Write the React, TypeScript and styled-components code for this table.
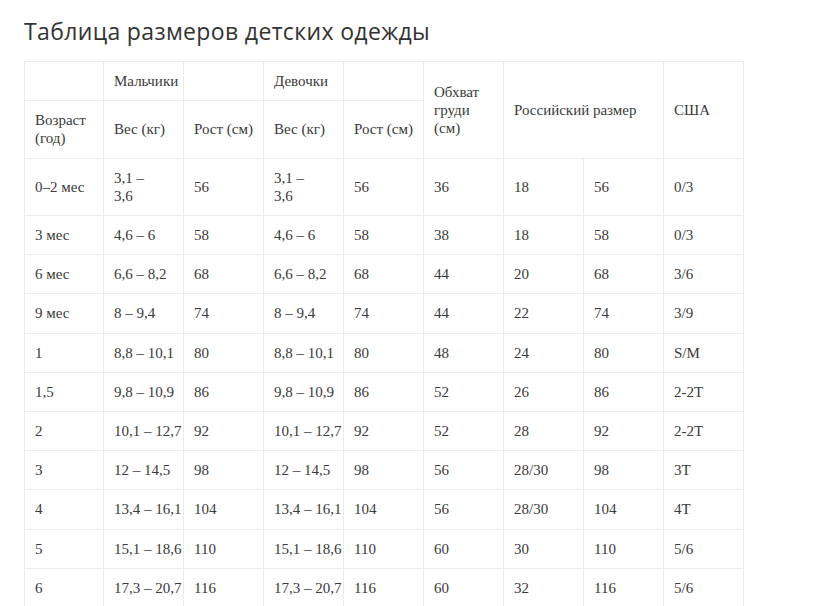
import React from 'react'
import styled, { createGlobalStyle } from 'styled-components'

const GlobalStyle = createGlobalStyle`
  html, body {
    margin: 0;
    padding: 0;
    background: #ffffff;
  }
`

type Row = [string, string, string, string, string, string, string, string, string]

const rows: Row[] = [
	['0–2 мес', '3,1 –\n3,6', '56', '3,1 –\n3,6', '56', '36', '18', '56', '0/3'],
	['3 мес', '4,6 – 6', '58', '4,6 – 6', '58', '38', '18', '58', '0/3'],
	['6 мес', '6,6 – 8,2', '68', '6,6 – 8,2', '68', '44', '20', '68', '3/6'],
	['9 мес', '8 – 9,4', '74', '8 – 9,4', '74', '44', '22', '74', '3/9'],
	['1', '8,8 – 10,1', '80', '8,8 – 10,1', '80', '48', '24', '80', 'S/M'],
	['1,5', '9,8 – 10,9', '86', '9,8 – 10,9', '86', '52', '26', '86', '2-2T'],
	['2', '10,1 – 12,7', '92', '10,1 – 12,7', '92', '52', '28', '92', '2-2T'],
	['3', '12 – 14,5', '98', '12 – 14,5', '98', '56', '28/30', '98', '3T'],
	['4', '13,4 – 16,1', '104', '13,4 – 16,1', '104', '56', '28/30', '104', '4T'],
	['5', '15,1 – 18,6', '110', '15,1 – 18,6', '110', '60', '30', '110', '5/6'],
	['6', '17,3 – 20,7', '116', '17,3 – 20,7', '116', '60', '32', '116', '5/6'],
]

function renderText(text: string) {
	const parts = text.split('\n')
	return parts.map((part, i) => (
		<React.Fragment key={i}>
			{i > 0 && <br />}
			{part}
		</React.Fragment>
	))
}

function App() {
	return (
		<>
			<GlobalStyle />
			<StyledPage>
				<StyledTitle>Таблица размеров детских одежды</StyledTitle>
				<StyledTable>
					<colgroup>
						<col style={{ width: 79 }} />
						{Array.from({ length: 8 }).map((_, i) => (
							<col key={i} style={{ width: 80 }} />
						))}
					</colgroup>
					<thead>
						<tr>
							<StyledCell />
							<StyledCell>Мальчики</StyledCell>
							<StyledCell />
							<StyledCell>Девочки</StyledCell>
							<StyledCell />
							<StyledCell rowSpan={2}>
								Обхват
								<br />
								груди
								<br />
								(см)
							</StyledCell>
							<StyledCell rowSpan={2} colSpan={2}>
								Российский размер
							</StyledCell>
							<StyledCell rowSpan={2}>США</StyledCell>
						</tr>
						<tr>
							<StyledCell>
								Возраст
								<br />
								(год)
							</StyledCell>
							<StyledCell>Вес (кг)</StyledCell>
							<StyledCell>Рост (см)</StyledCell>
							<StyledCell>Вес (кг)</StyledCell>
							<StyledCell>Рост (см)</StyledCell>
						</tr>
					</thead>
					<tbody>
						{rows.map((row, r) => (
							<tr key={r}>
								{row.map((value, c) => (
									<StyledCell key={c}>{renderText(value)}</StyledCell>
								))}
							</tr>
						))}
					</tbody>
				</StyledTable>
			</StyledPage>
		</>
	)
}

const StyledPage = styled.div`
  padding: 14px 24px 0 24px;
  width: 719px;
`
const StyledTitle = styled.h1`
  margin: 0 0 13px 0;
  font-family: 'Open Sans', 'Noto Sans', sans-serif;
  font-weight: 400;
  font-size: 23px;
  line-height: 34px;
  color: #333333;
  letter-spacing: 0.35px;
`
const StyledTable = styled.table`
  border-collapse: collapse;
  table-layout: fixed;
  width: 719px;
  font-family: 'Liberation Serif', 'DejaVu Serif', serif;
  font-size: 15px;
  color: #3a3a3a;
`
const StyledCell = styled.td`
  border: 1px solid #ebebeb;
  padding: 10px;
  line-height: 18.2px;
  vertical-align: middle;
  text-align: left;
  font-weight: 400;
  white-space: nowrap;
`

export default App
